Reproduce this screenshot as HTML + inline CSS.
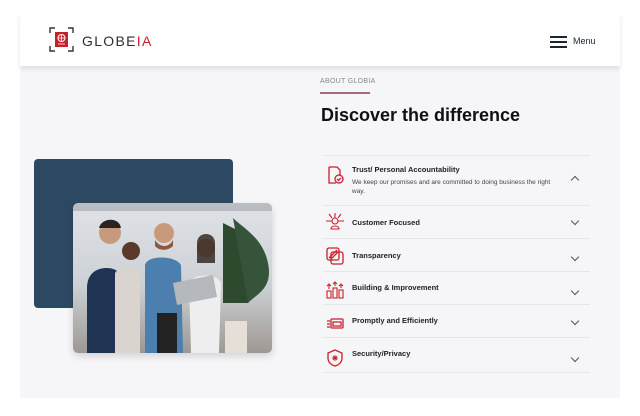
<!DOCTYPE html>
<html><head><meta charset="utf-8"><style>
*{margin:0;padding:0;box-sizing:border-box}
body{width:640px;height:416px;background:#fff;font-family:"Liberation Sans",sans-serif;position:relative;overflow:hidden}
.gray{position:absolute;left:20px;top:60px;width:600px;height:338px;background:#f6f6f9}
.hdr{position:absolute;left:20px;top:14px;width:600px;height:52px;background:#fff;box-shadow:0 3px 5px rgba(0,0,0,.10)}
.logo{position:absolute;left:29px;top:13px;width:25px;height:25px}
.brand{position:absolute;left:62px;top:19px;font-size:14px;letter-spacing:1.3px;color:#2a2e35}
.brand span{color:#c8202a}
.menu{position:absolute;left:530px;top:22px}
.menu i{display:block;width:17px;height:2px;background:#1c2430;margin-bottom:3px}
.menut{position:absolute;left:553px;top:22px;font-size:9px;color:#1c2430}
.about{position:absolute;left:320px;top:78px;font-size:7px;color:#888;letter-spacing:.3px}
.ul{position:absolute;left:320px;top:92px;width:50px;height:1.5px;background:#a4697a}
h1{position:absolute;left:321px;top:105px;font-size:18px;color:#111;font-weight:bold}
.box{position:absolute;left:34px;top:159px;width:199px;height:149px;background:#2c4863;border-radius:4px}
.photo{position:absolute;left:73px;top:203px;width:199px;height:150px;border-radius:5px;overflow:hidden;background:linear-gradient(180deg,#dfe3e7 0%,#cdd1d5 55%,#9d9893 100%);box-shadow:0 3px 8px rgba(0,0,0,.15)}
.row{position:absolute;left:323px;width:267px;border-top:1px solid #e6e6ea}
.t{position:absolute;left:29px;font-size:7.5px;font-weight:bold;color:#222}
.d{position:absolute;left:29px;top:22px;font-size:6.5px;color:#444;line-height:9px;width:205px}
.ic{position:absolute;left:3px;width:18px;height:18px}
.ch{position:absolute;left:249px;width:6px;height:6px;border-right:1.2px solid #555;border-bottom:1.2px solid #555;transform:rotate(45deg)}
.up{transform:rotate(-135deg)}
</style></head><body>
<div class="gray"></div>
<div class="hdr">
<svg class="logo" viewBox="0 0 25 25" fill="none" stroke="#333" stroke-width="1.4"><path d="M1 6V1h5M19 1h5v5M24 19v5h-5M6 24H1v-5"/><rect x="6" y="5" width="13" height="15" fill="#c8202a" stroke="none"/><circle cx="12.5" cy="11" r="3.5" stroke="#fff" stroke-width="1"/><path d="M9 11h7M12.5 7.5v7M9 17h7" stroke="#fff" stroke-width=".8"/></svg>
<div class="brand">GLOBE<span>IA</span></div>
<div class="menu"><i></i><i></i><i></i></div>
<div class="menut">Menu</div>
</div>
<div class="about">ABOUT GLOBIA</div>
<div class="ul"></div>
<h1>Discover the difference</h1>
<div class="box"></div>
<div class="photo">
<svg width="199" height="150" viewBox="0 0 199 150">
<path d="M0 0h199v8H0z" fill="#4a4f55" opacity=".25"/>
<path d="M150 20l20 10 15 30-10 40h-25z" fill="#2d4a2e"/>
<path d="M160 15c10 10 30 20 35 45s-10 30-20 40" fill="#35543a"/>
<rect x="152" y="118" width="22" height="32" fill="#e6dfd8"/>
<path d="M14 150V85c0-15 10-20 20-20s20 8 22 25l2 60z" fill="#1f3453"/>
<circle cx="37" cy="30" r="11" fill="#c79a80"/><path d="M26 25c2-10 20-12 22 0z" fill="#2a2320"/>
<path d="M42 150V70c5-8 20-8 25 0v80z" fill="#d9d4cd"/>
<circle cx="58" cy="48" r="9" fill="#5a3a2a"/>
<path d="M72 150V62c2-10 30-10 36 0l2 88z" fill="#4c7fae"/>
<circle cx="91" cy="30" r="10" fill="#c89a7c"/><path d="M82 37c5 8 14 8 18 0v6c-5 5-14 5-18 0z" fill="#8a5a3a"/>
<rect x="84" y="110" width="20" height="40" fill="#222"/>
<path d="M118 150l-2-70c5-10 28-10 32 0l-2 70z" fill="#eeeeef"/>
<circle cx="133" cy="45" r="9" fill="#c9987e"/><path d="M124 40c0-12 18-12 18 0v20h-18z" fill="#2a1f1a" opacity=".8"/>
<path d="M100 80l40-8 4 22-40 8z" fill="#b5b8bc"/>
</svg>
</div>

<div class="row" style="top:155px;height:50px"><svg class="ic" style="top:10px" viewBox="0 0 18 18" fill="none" stroke="#c8202a" stroke-width="1.3"><path d="M3 1h8l3 3v6M3 1v16h7"/><circle cx="13" cy="13" r="4"/><path d="M11 13l1.5 1.5L15 12"/></svg><div class="t" style="top:9px">Trust/ Personal Accountability</div><div class="d">We keep our promises and are committed to doing business the right way.</div><div class="ch up" style="top:21px"></div></div>
<div class="row" style="top:205px;height:33px"><svg class="ic" style="top:6px" viewBox="0 0 18 18" fill="none" stroke="#c8202a" stroke-width="1.1"><circle cx="9" cy="9" r="3"/><path d="M5 17c0-4 8-4 8 0zM9 6V1M6 6L3 2M12 6l3-4M6 9H0M12 9h6"/></svg><div class="t" style="top:12px">Customer Focused</div><div class="ch" style="top:12px"></div></div>
<div class="row" style="top:238px;height:33px"><svg class="ic" style="top:8px" viewBox="0 0 18 18" fill="none" stroke="#c8202a" stroke-width="1.3"><rect x="1" y="1" width="12" height="12" rx="2"/><rect x="5" y="5" width="12" height="12" rx="2"/><path d="M3 11l8-8M5 12l7-7" /></svg><div class="t" style="top:12px">Transparency</div><div class="ch" style="top:15px"></div></div>
<div class="row" style="top:271px;height:33px"><svg class="ic" style="top:9px" viewBox="0 0 18 18" fill="none" stroke="#c8202a" stroke-width="1.1"><rect x="1" y="10" width="4" height="7"/><rect x="7" y="7" width="4" height="10"/><rect x="13" y="9" width="4" height="8"/><path d="M3 8V3M1 5l2-2 2 2M9 5V1M7 3l2-2 2 2M15 7V3M13 5l2-2 2 2"/></svg><div class="t" style="top:11px">Building &amp; Improvement</div><div class="ch" style="top:16px"></div></div>
<div class="row" style="top:304px;height:33px"><svg class="ic" style="top:10px" viewBox="0 0 18 18" fill="none" stroke="#c8202a" stroke-width="1.3"><rect x="5" y="4" width="12" height="9" rx="1"/><path d="M1 6h3M1 9h3M1 12h3M7 7h8v4H7z"/></svg><div class="t" style="top:11px">Promptly and Efficiently</div><div class="ch" style="top:13px"></div></div>
<div class="row" style="top:337px;height:36px;border-bottom:1px solid #e6e6ea"><svg class="ic" style="top:11px" viewBox="0 0 18 18" fill="none" stroke="#c8202a" stroke-width="1.3"><path d="M9 1l7 3v5c0 4-3 7-7 8-4-1-7-4-7-8V4z"/><path d="M9 6v6M6 9h6M7 7l4 4M11 7l-4 4" stroke-width=".9"/></svg><div class="t" style="top:11px">Security/Privacy</div><div class="ch" style="top:17px"></div></div>
</body></html>
